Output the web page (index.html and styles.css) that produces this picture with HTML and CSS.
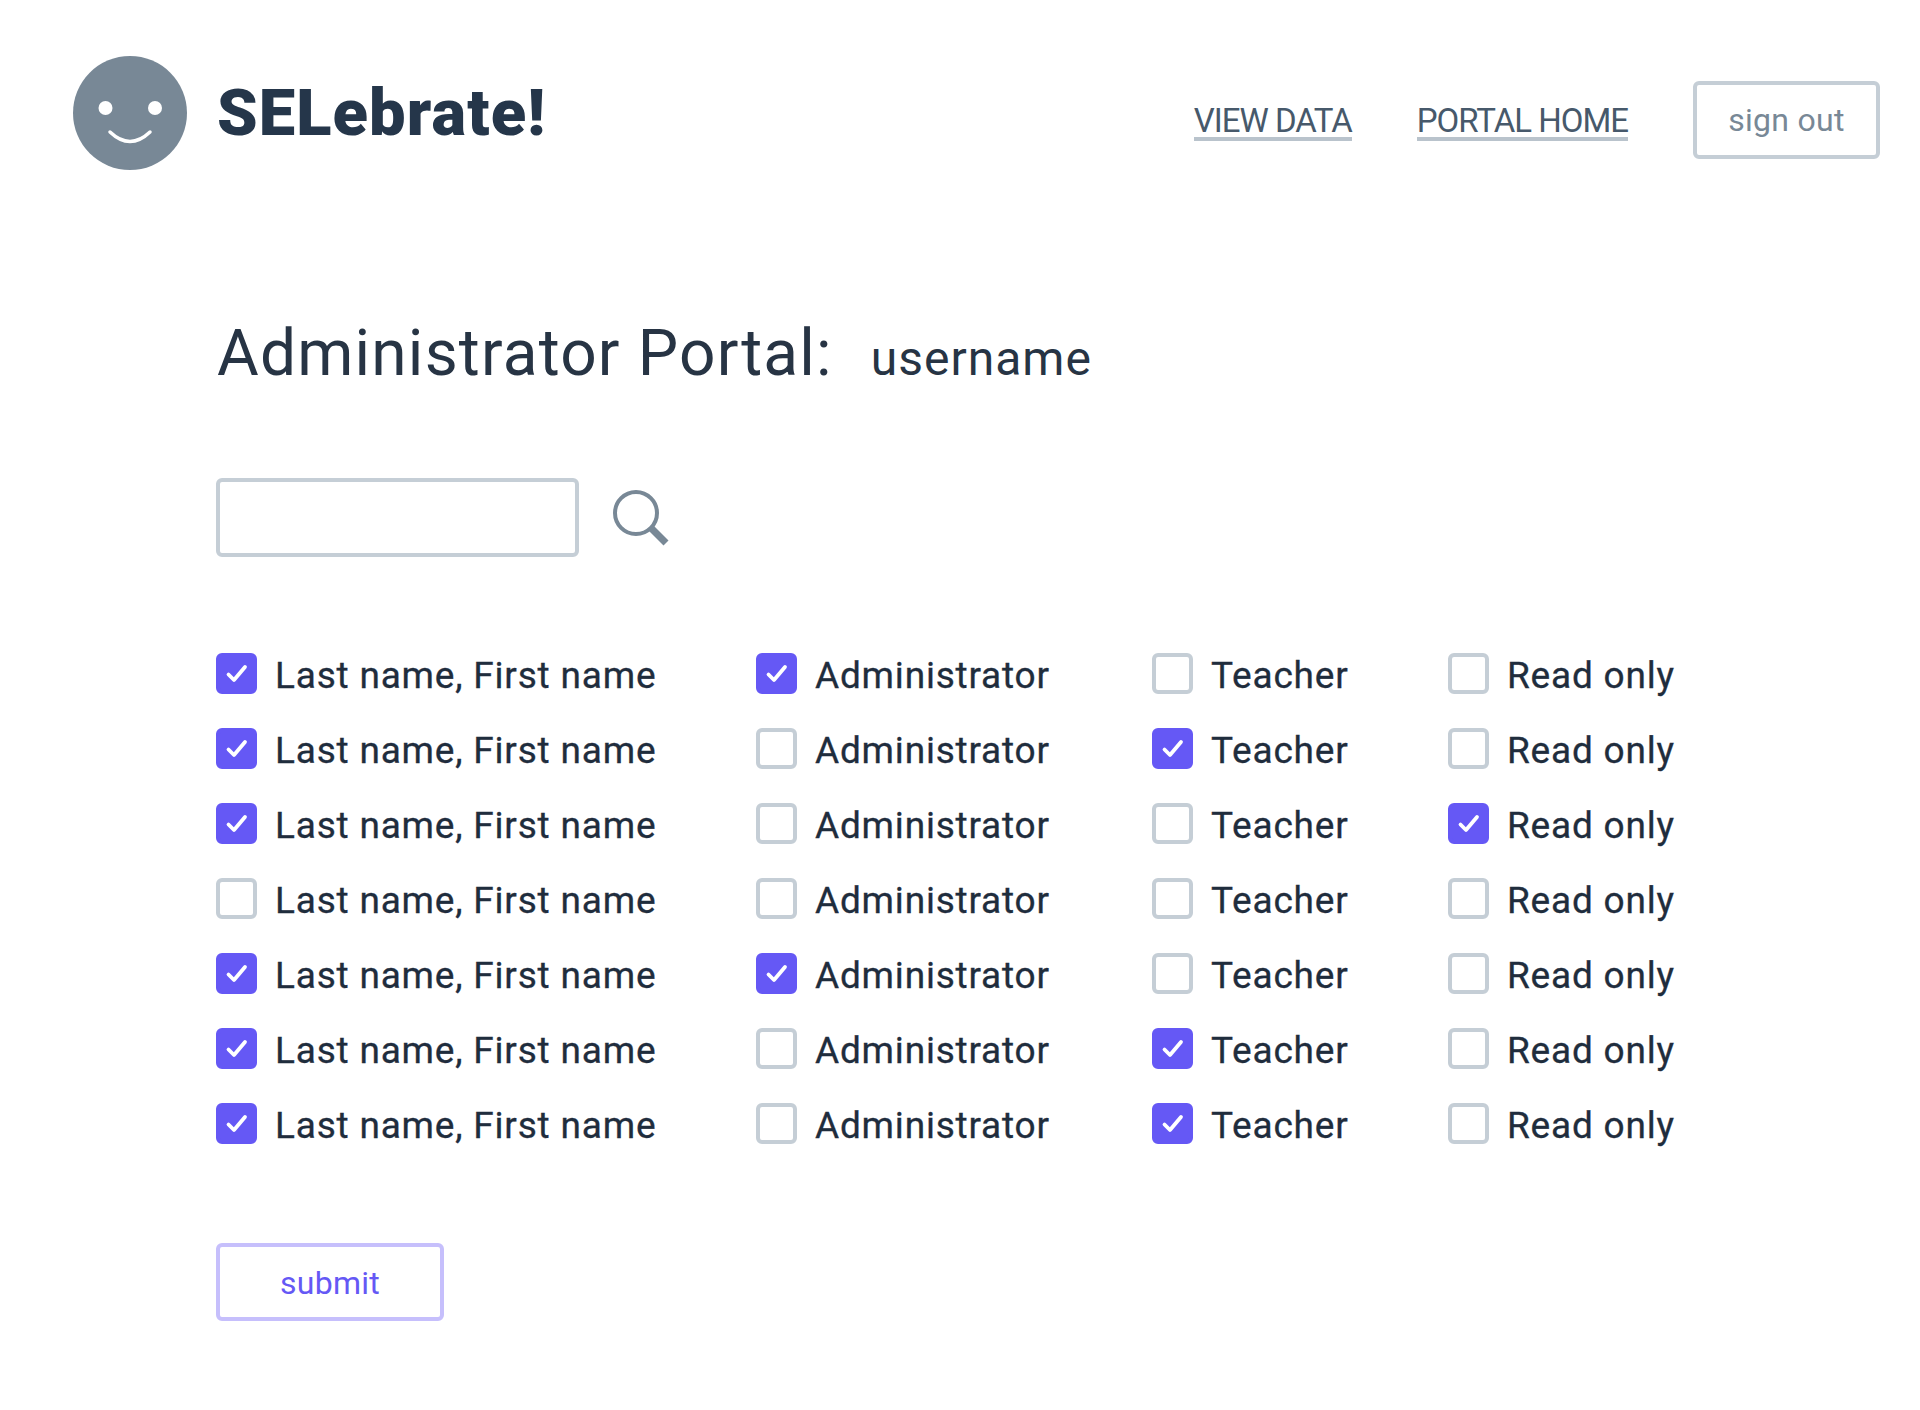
FILE: index.html
```html
<!DOCTYPE html>
<html lang="en">
<head>
<meta charset="utf-8">
<title>SELebrate! Administrator Portal</title>
<link rel="stylesheet" href="styles.css">
</head>
<body>
<svg class="defs" width="0" height="0" aria-hidden="true"><symbol id="tick" viewBox="0 0 41 41"><path d="M12.500 21.500 L18 27 L29 14" fill="none" stroke="#fff" stroke-width="3.800" stroke-linecap="round" stroke-linejoin="round"/></symbol></svg>
<header class="top">
  <div class="brand">
    <svg class="logo" viewBox="0 0 114 114" aria-hidden="true">
      <circle cx="57" cy="57" r="57" fill="#788896"/>
      <circle cx="32.500" cy="52" r="7" fill="#fff"/>
      <circle cx="82" cy="52" r="7" fill="#fff"/>
      <path d="M37 76 Q57 95 77 76" fill="none" stroke="#fff" stroke-width="3.500" stroke-linecap="round"/>
    </svg>
    <span class="wordmark">SELebrate!</span>
  </div>
  <nav class="nav">
    <a class="nav-link" href="#">VIEW DATA</a>
    <a class="nav-link" href="#">PORTAL HOME</a>
    <button class="btn btn-signout" type="button">sign out</button>
  </nav>
</header>
<main class="main">
  <h1 class="title">Administrator Portal:<span class="user">username</span></h1>
  <div class="search">
    <input class="search-input" type="text" aria-label="Search">
    <svg class="search-icon" viewBox="0 0 56 56" aria-hidden="true">
      <circle cx="23" cy="23" r="21" fill="none" stroke="#788896" stroke-width="4"/>
      <path d="M37 37 L53 53" fill="none" stroke="#788896" stroke-width="7"/>
    </svg>
  </div>
  <div class="grid">
    <label class="opt"><span class="box on"><svg><use href="#tick"/></svg></span>Last name, First name</label>
    <label class="opt"><span class="box on"><svg><use href="#tick"/></svg></span>Administrator</label>
    <label class="opt"><span class="box"></span>Teacher</label>
    <label class="opt"><span class="box"></span>Read only</label>

    <label class="opt"><span class="box on"><svg><use href="#tick"/></svg></span>Last name, First name</label>
    <label class="opt"><span class="box"></span>Administrator</label>
    <label class="opt"><span class="box on"><svg><use href="#tick"/></svg></span>Teacher</label>
    <label class="opt"><span class="box"></span>Read only</label>

    <label class="opt"><span class="box on"><svg><use href="#tick"/></svg></span>Last name, First name</label>
    <label class="opt"><span class="box"></span>Administrator</label>
    <label class="opt"><span class="box"></span>Teacher</label>
    <label class="opt"><span class="box on"><svg><use href="#tick"/></svg></span>Read only</label>

    <label class="opt"><span class="box"></span>Last name, First name</label>
    <label class="opt"><span class="box"></span>Administrator</label>
    <label class="opt"><span class="box"></span>Teacher</label>
    <label class="opt"><span class="box"></span>Read only</label>

    <label class="opt"><span class="box on"><svg><use href="#tick"/></svg></span>Last name, First name</label>
    <label class="opt"><span class="box on"><svg><use href="#tick"/></svg></span>Administrator</label>
    <label class="opt"><span class="box"></span>Teacher</label>
    <label class="opt"><span class="box"></span>Read only</label>

    <label class="opt"><span class="box on"><svg><use href="#tick"/></svg></span>Last name, First name</label>
    <label class="opt"><span class="box"></span>Administrator</label>
    <label class="opt"><span class="box on"><svg><use href="#tick"/></svg></span>Teacher</label>
    <label class="opt"><span class="box"></span>Read only</label>

    <label class="opt"><span class="box on"><svg><use href="#tick"/></svg></span>Last name, First name</label>
    <label class="opt"><span class="box"></span>Administrator</label>
    <label class="opt"><span class="box on"><svg><use href="#tick"/></svg></span>Teacher</label>
    <label class="opt"><span class="box"></span>Read only</label>
  </div>
  <button class="btn btn-submit" type="submit">submit</button>
</main>
</body>
</html>
```
FILE: styles.css
```css
* { box-sizing: border-box; }
html, body { margin: 0; padding: 0; background: #fff; }
body {
  height: 1410px;
  font-family: "Roboto", "Liberation Sans", sans-serif;
  color: #1f2d3d;
  overflow: hidden;
}
.defs { position: absolute; }
.top {
  display: flex;
  justify-content: space-between;
  align-items: flex-start;
  padding: 56px 40px 0 73px;
}
.brand { display: flex; align-items: center; gap: 30px; }
.logo { width: 114px; height: 114px; display: block; }
.wordmark {
  font-size: 65px;
  font-weight: 900;
  letter-spacing: 1.1px;
  color: #25364a;
}
.nav { display: flex; align-items: center; gap: 65px; padding-top: 25px; }
.nav-link {
  font-size: 33px;
  line-height: 33px;
  padding-top: 5px;
  color: #47596b;
  text-decoration: none;
  border-bottom: 4px solid #b9c3cc;
  letter-spacing: -1px;
}
.btn {
  font-family: inherit;
  background: #fff;
  border-radius: 6px;
  border-style: solid;
  border-width: 4px;
  padding: 0;
  letter-spacing: 0.3px;
}
.btn-signout {
  width: 187px;
  height: 78px;
  font-size: 32px;
  color: #788896;
  border-color: #c5ced6;
}
.main { padding: 0 0 0 216px; }
.title {
  margin: 146px 0 0;
  padding-left: 1px;
  font-size: 64px;
  line-height: 76px;
  font-weight: 400;
  color: #273444;
  display: flex;
  align-items: baseline;
  letter-spacing: 1.2px;
}
.user { font-size: 48px; margin-left: 38px; letter-spacing: 1px; }
.search {
  display: flex;
  align-items: center;
  gap: 34px;
  margin-top: 81px;
}
.search-input {
  width: 363px;
  height: 79px;
  border: 4px solid #c5ced6;
  border-radius: 6px;
  background: #fff;
}
.search-icon { width: 56px; height: 56px; display: block; }
.grid {
  display: grid;
  grid-template-columns: 540px 396px 296px auto;
  grid-auto-rows: 75px;
  margin-top: 81px;
}
.opt {
  display: flex;
  align-items: center;
  gap: 18px;
  font-size: 37px;
  line-height: 75px;
  color: #1f2d3d;
  letter-spacing: 0.8px;
  -webkit-text-stroke: 0.3px #1f2d3d;
}
.box {
  width: 41px;
  height: 41px;
  flex: none;
  border: 4px solid #c5ced6;
  border-radius: 6px;
  background: #fff;
  margin-top: -4px;
  position: relative;
}
.box.on { background: #6558f5; border-color: #6558f5; }
.box svg { position: absolute; left: -4px; top: -4px; width: 41px; height: 41px; display: block; }
.btn-submit {
  display: block;
  margin-top: 80px;
  padding-top: 2px;
  width: 228px;
  height: 78px;
  font-size: 32px;
  color: #6558f5;
  border-color: #c6bffc;
}
```
